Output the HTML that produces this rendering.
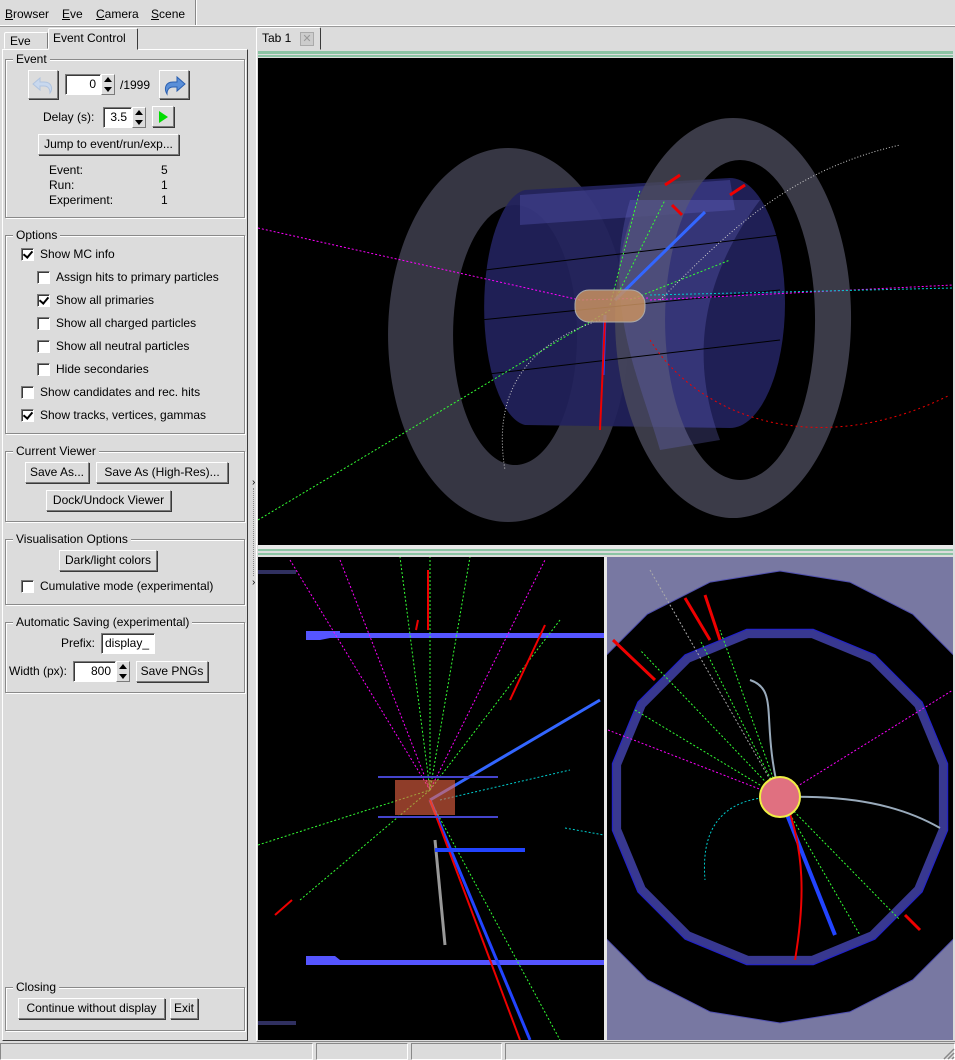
<!DOCTYPE html>
<html><head><meta charset="utf-8">
<style>
*{box-sizing:border-box;margin:0;padding:0}
body{width:955px;height:1060px;background:#dcdcdc;font-family:"Liberation Sans",sans-serif;font-size:12px;color:#000;position:relative;overflow:hidden}
.a{position:absolute}
.t{position:absolute;white-space:nowrap;line-height:14px}
.btn{position:absolute;background:#dcdcdc;border:1px solid;border-color:#fff #7a7a7a #7a7a7a #fff;box-shadow:1px 1px 0 #3a3a3a;text-align:center;line-height:19px;white-space:nowrap}
.grp{position:absolute;left:5px;width:240px;border:1px solid #8a8a8a;box-shadow:inset 1px 1px 0 #fff,1px 1px 0 #fff}
.gt{position:absolute;top:-8px;left:7px;background:#dcdcdc;padding:0 3px;line-height:14px}
.ent{position:absolute;background:#fff;border:1px solid;border-color:#7a7a7a #fff #fff #7a7a7a;box-shadow:inset 1px 1px 0 #3a3a3a;text-align:right;padding-right:4px;line-height:18px}
.spin{position:absolute;width:14px;border:1px solid;border-color:#fff #7a7a7a #7a7a7a #fff;background:#dcdcdc}
.spin:before{content:"";position:absolute;left:2px;top:2px;border:4px solid transparent;border-bottom:5px solid #000;border-top:0}
.spin:after{content:"";position:absolute;left:2px;bottom:2px;border:4px solid transparent;border-top:5px solid #000;border-bottom:0}
.cb{position:absolute;width:13px;height:13px;background:#fff;border:1px solid;border-color:#7a7a7a #fff #fff #7a7a7a;box-shadow:inset 1px 1px 0 #3a3a3a}
.cb.k:after{content:"";position:absolute;left:3px;top:0px;width:4px;height:7px;border:solid #000;border-width:0 2px 2px 0;transform:rotate(40deg)}
u{text-decoration:underline}
</style></head><body>
<div class="a" style="left:0;top:0;width:955px;height:26px;border-bottom:1px solid #fff;box-shadow:0 1px 0 #999"></div>
<div class="a" style="left:195px;top:0;width:1px;height:25px;background:#888"></div>
<div class="a" style="left:196px;top:0;width:1px;height:25px;background:#fff"></div>
<div class="t" style="left:5px;top:7px"><u>B</u>rowser</div>
<div class="t" style="left:62px;top:7px"><u>E</u>ve</div>
<div class="t" style="left:96px;top:7px"><u>C</u>amera</div>
<div class="t" style="left:151px;top:7px"><u>S</u>cene</div>

<div class="a" style="left:4px;top:32px;width:44px;height:17px;border:1px solid;border-color:#fff #7a7a7a transparent #fff;border-radius:2px 2px 0 0"></div>
<div class="t" style="left:10px;top:34px">Eve</div>
<div class="a" style="left:48px;top:28px;width:90px;height:22px;border:1px solid;border-color:#fff #3a3a3a transparent #fff;background:#dcdcdc;border-radius:2px 2px 0 0;z-index:2"></div>
<div class="t" style="left:53px;top:31px;z-index:3">Event Control</div>
<div class="a" style="left:2px;top:49px;width:246px;height:992px;border:1px solid;border-color:#fff #3a3a3a #3a3a3a #fff"></div>

<div class="grp" style="top:59px;height:159px"><span class="gt">Event</span></div>
<div class="btn" style="left:28px;top:70px;width:30px;height:29px"></div>
<svg class="a" style="left:31px;top:73px" width="24" height="24" viewBox="0 0 24 24"><path d="M19 20c3-4 2-11-6-11H9V5L2 11l7 6v-4h4c4 0 6 3 6 7z" fill="#c8d8ee" stroke="#b0c4e0"/></svg>
<div class="ent" style="left:65px;top:74px;width:36px;height:21px">0</div>
<div class="spin" style="left:101px;top:74px;height:21px"></div>
<div class="t" style="left:120px;top:78px">/1999</div>
<div class="btn" style="left:159px;top:70px;width:30px;height:29px"></div>
<svg class="a" style="left:162px;top:73px" width="24" height="24" viewBox="0 0 24 24"><path d="M5 21c-3-5-2-12 6-12h4V4l8 7-8 7v-4h-4c-4 0-6 3-6 7z" fill="#5a8fd8" stroke="#2a5fb0"/></svg>
<div class="t" style="left:43px;top:110px">Delay (s):</div>
<div class="ent" style="left:103px;top:107px;width:29px;height:21px">3.5</div>
<div class="spin" style="left:132px;top:107px;height:21px"></div>
<div class="btn" style="left:152px;top:106px;width:22px;height:21px"></div>
<div class="a" style="left:159px;top:111px;border:6px solid transparent;border-left:9px solid #0d0;border-right:0"></div>
<div class="btn" style="left:38px;top:134px;width:141px;height:21px">Jump to event/run/exp...</div>
<div class="t" style="left:49px;top:163px">Event:</div><div class="t" style="left:161px;top:163px">5</div>
<div class="t" style="left:49px;top:178px">Run:</div><div class="t" style="left:161px;top:178px">1</div>
<div class="t" style="left:49px;top:193px">Experiment:</div><div class="t" style="left:161px;top:193px">1</div>

<div class="grp" style="top:235px;height:199px"><span class="gt">Options</span></div>
<div class="cb k" style="left:21px;top:248px"></div><div class="t" style="left:40px;top:247px">Show MC info</div>
<div class="cb" style="left:37px;top:271px"></div><div class="t" style="left:56px;top:270px">Assign hits to primary particles</div>
<div class="cb k" style="left:37px;top:294px"></div><div class="t" style="left:56px;top:293px">Show all primaries</div>
<div class="cb" style="left:37px;top:317px"></div><div class="t" style="left:56px;top:316px">Show all charged particles</div>
<div class="cb" style="left:37px;top:340px"></div><div class="t" style="left:56px;top:339px">Show all neutral particles</div>
<div class="cb" style="left:37px;top:363px"></div><div class="t" style="left:56px;top:362px">Hide secondaries</div>
<div class="cb" style="left:21px;top:386px"></div><div class="t" style="left:40px;top:385px">Show candidates and rec. hits</div>
<div class="cb k" style="left:21px;top:409px"></div><div class="t" style="left:40px;top:408px">Show tracks, vertices, gammas</div>

<div class="grp" style="top:451px;height:71px"><span class="gt">Current Viewer</span></div>
<div class="btn" style="left:25px;top:462px;width:64px;height:21px">Save As...</div>
<div class="btn" style="left:96px;top:462px;width:132px;height:21px">Save As (High-Res)...</div>
<div class="btn" style="left:46px;top:490px;width:125px;height:21px">Dock/Undock Viewer</div>

<div class="grp" style="top:539px;height:66px"><span class="gt">Visualisation Options</span></div>
<div class="btn" style="left:59px;top:550px;width:98px;height:21px">Dark/light colors</div>
<div class="cb" style="left:21px;top:580px"></div><div class="t" style="left:40px;top:579px">Cumulative mode (experimental)</div>

<div class="grp" style="top:622px;height:71px"><span class="gt">Automatic Saving (experimental)</span></div>
<div class="t" style="left:61px;top:636px">Prefix:</div>
<div class="ent" style="left:101px;top:633px;width:54px;height:21px;text-align:left;padding-left:3px">display_</div>
<div class="t" style="left:9px;top:664px">Width (px):</div>
<div class="ent" style="left:73px;top:661px;width:43px;height:21px">800</div>
<div class="spin" style="left:116px;top:661px;height:21px"></div>
<div class="btn" style="left:136px;top:661px;width:72px;height:21px">Save PNGs</div>

<div class="grp" style="top:987px;height:44px"><span class="gt">Closing</span></div>
<div class="btn" style="left:18px;top:998px;width:147px;height:21px">Continue without display</div>
<div class="btn" style="left:170px;top:998px;width:28px;height:21px">Exit</div>

<div class="a" style="left:252px;top:478px;font-size:10px;line-height:10px">&#8250;</div>
<div class="a" style="left:253px;top:488px;width:1px;height:88px;border-left:1px dotted #888"></div>
<div class="a" style="left:252px;top:578px;font-size:10px;line-height:10px">&#8250;</div>

<div class="a" style="left:256px;top:27px;width:65px;height:23px;border:1px solid;border-color:#fff #3a3a3a transparent #fff;border-radius:2px 2px 0 0"></div>
<div class="t" style="left:262px;top:31px">Tab 1</div>
<div class="a" style="left:300px;top:32px;width:14px;height:14px;border:1px solid #aaa;background:#ccc;color:#999;font-size:11px;line-height:12px;text-align:center">✕</div>
<div class="a" style="left:256px;top:49px;width:699px;height:993px;border-left:1px solid #fff;border-bottom:1px solid #888"></div>

<div class="a" style="left:258px;top:51px;width:695px;height:3px;background:#8cc4a4"></div>
<div class="a" style="left:258px;top:55px;width:695px;height:2px;background:#8cc4a4"></div>
<svg class="a" style="left:258px;top:58px" width="695" height="487" viewBox="258 58 695 487">
<rect x="258" y="58" width="695" height="487" fill="#000"/>
<path fill-rule="evenodd" fill="#3c3c4a" fill-opacity="0.9" d="M508 148a120 187 0 1 0 0.1 0zM515 205a62 130 0 1 0 0.1 0z"/>
<path d="M525 190 L730 178 A55 125 0 0 1 730 428 L525 425 A45 118 0 0 1 525 190Z" fill="#22225e" fill-opacity="0.9"/>
<path d="M520 195 L730 180 L735 210 L520 225Z" fill="#4a4aa0" fill-opacity="0.5"/>
<path fill-rule="evenodd" fill="#4a4a5a" fill-opacity="0.8" d="M733 118a118 200 0 1 0 0.1 0zM740 160a75 160 0 1 0 0.1 0z"/>
<path d="M630 200 C600 300 640 380 660 450 L720 440 C690 360 700 280 760 200Z" fill="#6a6ac8" fill-opacity="0.3"/>
<g stroke-width="1" fill="none">
<line x1="485" y1="270" x2="780" y2="235" stroke="#000"/>
<line x1="480" y1="320" x2="780" y2="290" stroke="#000"/>
<line x1="480" y1="375" x2="780" y2="340" stroke="#000"/>
<path d="M258 228 L580 300 L650 298" stroke="#f0f" stroke-dasharray="2 2"/>
<path d="M650 300 L953 285" stroke="#f0f" stroke-dasharray="2 2"/>
<path d="M650 295 L953 288" stroke="#0cc" stroke-dasharray="2 2"/>
<path d="M258 520 L610 310" stroke="#3f3" stroke-dasharray="2 2"/>
<path d="M610 305 L640 190 M615 300 L665 200 M630 300 L730 260" stroke="#3f3" stroke-dasharray="2 2"/>
<path d="M600 320 C540 340 490 380 505 470" stroke="#ccc" stroke-dasharray="1 2"/>
<path d="M660 300 C730 230 790 170 900 145" stroke="#ccc" stroke-dasharray="1 2"/>
<path d="M650 340 C700 420 820 460 950 395" stroke="#e00" stroke-dasharray="2 3"/>
<path d="M615 300 L705 212" stroke="#36f" stroke-width="3"/>
<path d="M605 315 L603 375" stroke="#24f" stroke-width="3"/>
<path d="M605 320 L600 430" stroke="#e00" stroke-width="2"/>
<path d="M672 205 L682 215 M665 185 L680 175 M730 195 L745 185" stroke="#e00" stroke-width="3"/>
</g>
<rect x="575" y="290" width="70" height="32" rx="14" fill="#c89060" fill-opacity="0.85" stroke="#aaa"/>
</svg>

<div class="a" style="left:258px;top:545px;width:695px;height:4px;background:#e8e8e8"></div>
<div class="a" style="left:258px;top:549px;width:695px;height:2px;background:#8cc4a4"></div>
<div class="a" style="left:258px;top:553px;width:695px;height:2px;background:#8cc4a4"></div>

<svg class="a" style="left:258px;top:557px" width="346" height="483" viewBox="258 557 346 483">
<rect x="258" y="557" width="346" height="483" fill="#000"/>
<rect x="258" y="570" width="38" height="4" fill="#303060"/>
<rect x="258" y="1021" width="38" height="4" fill="#303060"/>
<path d="M306 631 L340 631 L340 633 L604 633 L604 638 L330 638 L320 640 L306 640Z" fill="#5555ff"/>
<path d="M306 956 L335 956 L340 960 L604 960 L604 965 L306 965Z" fill="#5555ff"/>
<g fill="none" stroke-dasharray="2 2">
<path d="M290 560 L430 790 L545 560 M340 560 L430 790" stroke="#f0f"/>
<path d="M258 845 L430 790 L470 557 M300 900 L430 790 L400 557 M430 790 L430 557 M430 790 L560 620" stroke="#3f3"/>
<path d="M430 800 L560 1040" stroke="#3f3"/>
<path d="M440 800 L570 770 M565 828 L604 835" stroke="#0cc"/>
</g>
<path d="M430 800 L530 1040" stroke="#24f" stroke-width="3"/>
<path d="M430 800 L600 700" stroke="#36f" stroke-width="3"/>
<path d="M430 800 L520 1040" stroke="#e00" stroke-width="2"/>
<path d="M435 840 L445 945" stroke="#999" stroke-width="3"/>
<rect x="435" y="848" width="90" height="4" fill="#24f"/>
<rect x="378" y="776" width="120" height="2" fill="#44c"/>
<rect x="378" y="816" width="120" height="2" fill="#44c"/>
<rect x="395" y="780" width="60" height="35" fill="#e64" fill-opacity="0.6"/>
<path d="M428 570 L428 630 M418 620 L416 630 M545 625 L510 700 M275 915 L292 900" stroke="#e00" stroke-width="2"/>
</svg>

<svg class="a" style="left:607px;top:557px" width="346" height="483" viewBox="607 557 346 483">
<rect x="607" y="557" width="346" height="483" fill="#000"/>
<path id="o1" fill="#7878a2" stroke="#5050b0"/>
<path id="o2" fill="#000" stroke="#5050b0"/>
<path id="i1" fill="#383890" stroke="#2020d0"/>
<path id="i2" fill="#000"/>
<g fill="none" stroke-dasharray="2 2">
<path d="M608 730 L780 797 L953 690" stroke="#f0f"/>
<path d="M635 710 L780 797 L640 650 M780 797 L720 630 M780 797 L700 640 M780 797 L900 920 M780 797 L860 935" stroke="#3f3"/>
<path d="M770 797 C730 800 700 820 705 880" stroke="#0cc"/>
<path d="M650 570 L780 797" stroke="#aaa"/>
</g>
<path d="M780 797 C760 720 780 690 750 680" stroke="#9ab" stroke-width="2" fill="none"/>
<path d="M780 797 C850 795 900 805 940 828" stroke="#9ab" stroke-width="2" fill="none"/>
<path d="M780 797 L835 935" stroke="#24f" stroke-width="4"/>
<path d="M785 800 C805 850 805 900 795 960" stroke="#e00" stroke-width="2" fill="none"/>
<path d="M685 598 L710 640 M705 595 L720 640 M613 640 L655 680 M905 915 L920 930" stroke="#e00" stroke-width="3"/>
<circle cx="780" cy="797" r="20" fill="#e07080" stroke="#ee4" stroke-width="2"/>
</svg>
<script>
function poly(n,r,off){var cx=780,cy=797,s="";for(var i=0;i<n;i++){var a=off+i*2*Math.PI/n;s+=(i?"L":"M")+(cx+r*Math.sin(a)).toFixed(1)+" "+(cy-r*Math.cos(a)).toFixed(1);}return s+"Z";}
document.getElementById("o1").setAttribute("d",poly(20,310,0));
document.getElementById("o2").setAttribute("d",poly(20,226,0));
document.getElementById("i1").setAttribute("d",poly(16,171,Math.PI/16));
document.getElementById("i2").setAttribute("d",poly(16,162,Math.PI/16));
</script>
<div class="a" style="left:604px;top:557px;width:3px;height:483px;background:#e8e8e8"></div>

<div class="a" style="left:0;top:1043px;width:313px;height:17px;border:1px solid;border-color:#888 #fff #fff #888"></div>
<div class="a" style="left:316px;top:1043px;width:92px;height:17px;border:1px solid;border-color:#888 #fff #fff #888"></div>
<div class="a" style="left:411px;top:1043px;width:91px;height:17px;border:1px solid;border-color:#888 #fff #fff #888"></div>
<div class="a" style="left:505px;top:1043px;width:450px;height:17px;border:1px solid;border-color:#888 #fff #fff #888"></div>
<svg class="a" style="left:942px;top:1047px" width="13" height="13"><path d="M12 2L2 12M12 6L6 12M12 10L10 12" stroke="#888" stroke-width="1.5"/></svg>
</body></html>
